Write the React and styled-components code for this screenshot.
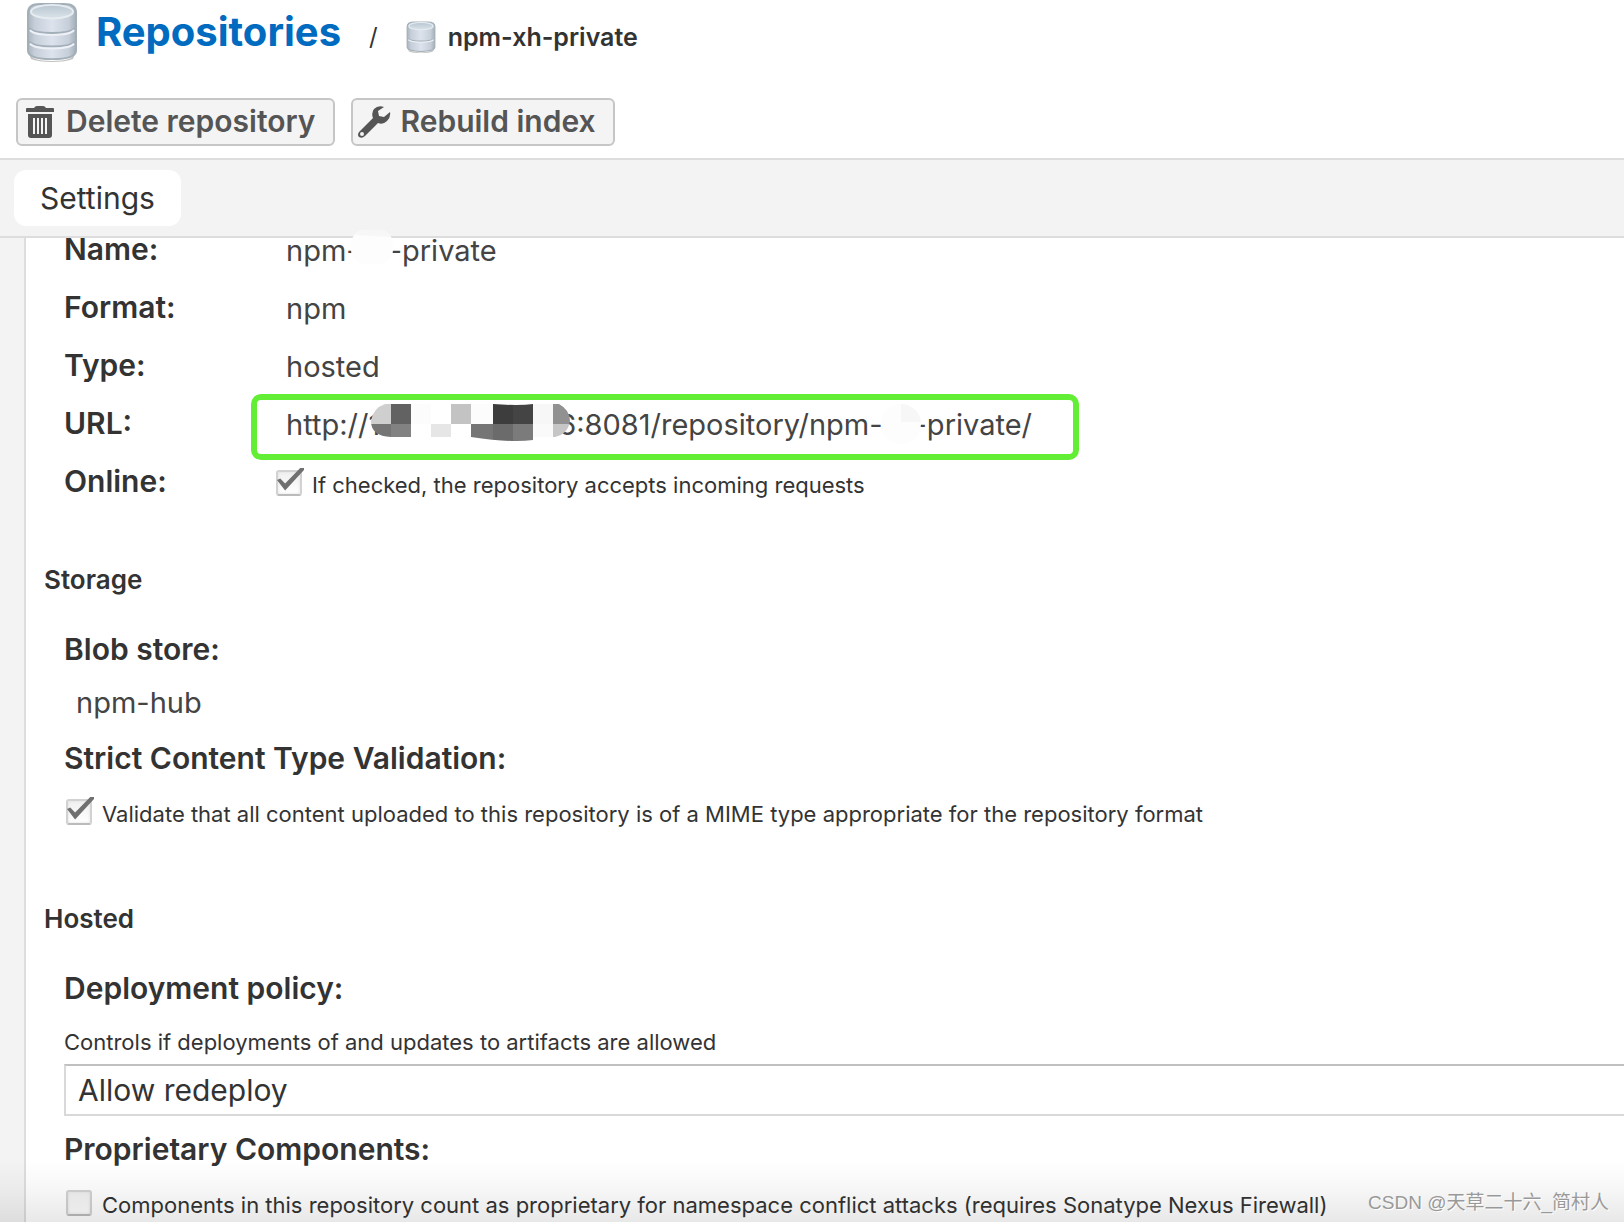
import React, { useState } from 'react'
import styled, { createGlobalStyle } from 'styled-components';

const GlobalStyle = createGlobalStyle`
    * {
        box-sizing: border-box;
    }
    body {
        margin: 0;
        color: #333;
        background: #fff;
        font-family: Inter, "Liberation Sans", sans-serif;
    }
    h1, h2, p {
        margin: 0;
    }
`;

const Page = styled.div`
    position: relative;
    display: flex;
    flex-direction: column;
    height: 100vh;
    overflow: hidden;
`;

const Header = styled.header`
    display: flex;
    align-items: center;
    gap: 18px;
    height: 64px;
    flex-shrink: 0;
    padding: 0 26px;
`;

const Breadcrumb = styled.nav`
    display: flex;
    align-items: flex-end;
    gap: 28px;
`;

const Title = styled.h1`
    font-size: 40px;
    font-weight: 700;
    line-height: 48px;
`;

const TitleLink = styled.a`
    color: #006bbf;
    text-decoration: none;
`;

const Slash = styled.span`
    font-size: 24px;
    line-height: 38px;
`;

const Crumb = styled.span`
    display: flex;
    align-items: center;
    gap: 12px;
    font-size: 25px;
    font-weight: 600;
    line-height: 38px;
`;

const Toolbar = styled.div`
    display: flex;
    gap: 16px;
    padding: 34px 16px 12px;
    border-bottom: 2px solid #ddd;
`;

const ToolButton = styled.button`
    display: flex;
    align-items: center;
    gap: 9px;
    height: 48px;
    padding: 0 17px 0 5px;
    border: 2px solid #c6c6c6;
    border-radius: 6px;
    background: #f4f4f4;
    color: #555;
    font: 600 30px/40px Inter, "Liberation Sans", sans-serif;
    cursor: pointer;
`;

const ButtonText = styled.span`
    padding-bottom: 3px;
`;

const TabBar = styled.div`
    display: flex;
    padding: 10px 14px;
    background: #f3f3f3;
    border-bottom: 2px solid #ddd;
`;

const Tab = styled.button`
    height: 56px;
    padding: 0 26px;
    border: 0;
    border-radius: 12px;
    background: #fff;
    color: #333;
    font: 30px Inter, "Liberation Sans", sans-serif;
    cursor: pointer;
`;

const Content = styled.main`
    flex: 1;
    min-height: 0;
    padding-left: 24px;
    background: #f3f3f3;
`;

const Form = styled.form`
    min-height: 100%;
    padding-left: 38px;
    border-left: 2px solid #ddd;
    background: #fff;
`;

const Row = styled.div`
    display: grid;
    grid-template-columns: 210px 1fr;
    height: 22px;
    margin-bottom: 36px;

    &:last-child {
        margin-bottom: 0;
    }
`;

const label = `
    display: block;
    font-size: 30px;
    font-weight: 600;
    line-height: 22px;
    color: #333;
`;

const Term = styled.span`
    ${label}
`;

const FieldLabel = styled.label`
    ${label}
`;

const Value = styled.div`
    position: relative;
    display: flex;
    padding-left: 12px;
    font-size: 29px;
    line-height: 26px;
    color: #444;
    white-space: nowrap;
`;

const Highlight = styled.div`
    position: absolute;
    top: -18px;
    left: -23px;
    width: 828px;
    height: 66px;
    border: 6px solid #62ee34;
    border-radius: 10px;
`;

const Mosaic = styled.svg`
    position: relative;
    flex-shrink: 0;
    margin: -8px ${props => props.$after}px 0 ${props => props.$before}px;
`;

const Section = styled.section`
    display: flex;
    flex-direction: column;
    margin-top: 76px;
    padding-bottom: 2px;
`;

const SectionTitle = styled.h2`
    margin: 0 0 46px -20px;
    font-size: 26px;
    font-weight: 600;
    line-height: 24px;
`;

const Field = styled.div`
    display: flex;
    flex-direction: column;
    gap: ${props => props.$gap || 30}px;
    margin-bottom: ${props => props.$space || 0}px;
`;

const HelpText = styled.p`
    font-size: 22px;
    line-height: 22px;
`;

const Select = styled.select`
    appearance: none;
    width: 100%;
    height: 52px;
    margin-top: -21px;
    padding: 0 12px;
    border: 2px solid #d9d9d9;
    border-top-color: #c0c0c0;
    border-right: 0;
    border-radius: 0;
    background: #fff;
    color: #333;
    font: 30px Inter, "Liberation Sans", sans-serif;
`;

const CheckLabel = styled.label`
    display: flex;
    align-items: center;
    height: 30px;
    font-size: 22px;
    white-space: nowrap;
`;

const Checkbox = styled.input`
    appearance: none;
    position: relative;
    width: 26px;
    height: 26px;
    margin: 0 10px 4px 2px;
    border: 2px solid #d2d2d2;
    border-bottom-color: #bbb;
    border-radius: 3px;
    background: linear-gradient(#f0f0f0, #fff);
    box-shadow: inset 0 0 3px #ddd;

    &:checked::after {
        content: "";
        position: absolute;
        top: -4px;
        left: -1px;
        width: 27px;
        height: 24px;
        background: #707070;
        clip-path: polygon(0 50%, 12% 44%, 30% 65%, 86% 0, 100% 0, 100% 8%, 30% 94%);
    }
`;

const BottomFade = styled.div`
    position: absolute;
    right: 0;
    bottom: 0;
    left: 0;
    height: 62px;
    background: linear-gradient(rgba(0, 0, 0, 0), rgba(0, 0, 0, 0.03) 45%, rgba(0, 0, 0, 0.09));
    pointer-events: none;
`;

const Watermark = styled.div`
    position: absolute;
    right: 15px;
    bottom: 4px;
    color: #999;
    font: 19px/30px "Liberation Sans", "Noto Sans CJK SC", sans-serif;
    text-shadow: 1px 1px 0 #fff;
`;

function DatabaseIcon({ width, height, layers = 3 }) {
    const seams = layers === 3 ? [27, 41] : [34];

    return (
        <svg width={width} height={height} viewBox="0 0 52 62" preserveAspectRatio="none" aria-hidden="true">
            <defs>
                <linearGradient id={`side${layers}`} x1="0" x2="1">
                    <stop offset="0" stopColor="#a9b5c0" />
                    <stop offset="0.14" stopColor="#c5ced9" />
                    <stop offset="0.5" stopColor="#dde3ed" />
                    <stop offset="0.85" stopColor="#c5ced9" />
                    <stop offset="1" stopColor="#a3afba" />
                </linearGradient>
                <linearGradient id={`top${layers}`} x1="0" y1="0" x2="0" y2="1">
                    <stop offset="0" stopColor="#b9c6d0" />
                    <stop offset="1" stopColor="#d9e3ea" />
                </linearGradient>
            </defs>
            <path d="M3 53Q5 61 26 61T49 53L47 59Q40 62 26 62T5 59Z" fill="#999" opacity="0.6" />
            <path
                d="M2 11Q2 2 14 2H38Q50 2 50 11V50Q50 59 26 59T2 50Z"
                fill={`url(#side${layers})`}
                stroke="#a3afb7"
                strokeWidth="2"
            />
            <ellipse cx="26" cy="10" rx="21" ry="7" fill={`url(#top${layers})`} stroke="#e6ecf0" strokeWidth="2" />
            {seams.map(y => (
                <g key={y} fill="none">
                    <path d={`M3 ${y}Q8 ${y + 5} 26 ${y + 5}T49 ${y}`} stroke="#a3afb9" strokeWidth="2" />
                    <path d={`M4 ${y + 2}Q8 ${y + 7} 26 ${y + 7}T48 ${y + 2}`} stroke="#eef1f6" strokeWidth="2" />
                </g>
            ))}
        </svg>
    )
}

function TrashIcon() {
    return (
        <svg width="34" height="34" viewBox="0 0 34 34" aria-hidden="true">
            <path fill="#555" d="M4 3H11Q12 1 14 1H20Q22 1 23 3H30Q31 3 31 4V7H3V4Q3 3 4 3Z" />
            <path
                fill="#555"
                fillRule="evenodd"
                d="M5 9H29V30Q29 33 26 33H8Q5 33 5 30ZM10 13V29H12V13ZM14 13V29H16V13ZM18 13V29H20V13ZM22 13V29H24V13Z"
            />
        </svg>
    )
}

function WrenchIcon() {
    return (
        <svg width="34" height="34" viewBox="0 0 34 34" aria-hidden="true">
            <path
                fill="#555"
                fillRule="evenodd"
                d="M26 2Q20 0 16 4Q13 8 15 13L1 27Q-1 30 1 32Q4 34 7 31L20 18Q25 20 29 16Q33 12 32 7L26 12L21 11L20 6ZM4 27A2 2 0 1 1 4 31A2 2 0 1 1 4 27Z"
            />
        </svg>
    )
}

const tiles = [
    [0, 0, 20, '#cfcfcf'], [20, 0, 20, '#626262'], [40, 0, 20, '#fcfcfc'], [60, 0, 20, '#fff'],
    [80, 0, 20, '#c3c3c3'], [100, 0, 22, '#fcfcfc'], [122, 0, 20, '#3d3d3d'], [142, 0, 20, '#444'],
    [162, 0, 20, '#f7f7f7'], [182, 0, 18, '#919191'],
    [0, 20, 20, '#757575'], [20, 20, 20, '#828282'], [40, 20, 20, '#fff'], [60, 20, 20, '#e6e6e6'],
    [80, 20, 20, '#fff'], [100, 20, 22, '#757575'], [122, 20, 20, '#6b6b6b'], [142, 20, 20, '#7b7b7b'],
    [162, 20, 20, '#fafafa'], [182, 20, 18, '#c6c6c6'],
];

function HostMosaic() {
    return (
        <Mosaic width="199" height="37" $before={-9} $after={-12} aria-hidden="true">
            <clipPath id="host">
                <path d="M14 0H122Q148 2 162 0H188Q199 6 199 17Q197 30 184 33H162V36Q140 39 100 33H20Q0 32 0 17Q2 4 14 0Z" />
            </clipPath>
            <g clipPath="url(#host)">
                {tiles.map(([x, y, width, fill]) => (
                    <rect key={`${x}-${y}`} x={x} y={y} width={width} height="20" fill={fill} />
                ))}
            </g>
        </Mosaic>
    )
}

function CheckField({ checked, children, ...props }) {
    const [value, setValue] = useState(checked);

    return (
        <CheckLabel>
            <Checkbox type="checkbox" checked={value} onChange={e => setValue(e.target.checked)} {...props} />
            {children}
        </CheckLabel>
    )
}

function App() {
    return (
        <Page>
            <GlobalStyle />
            <Header>
                <DatabaseIcon width={52} height={60} />
                <Breadcrumb>
                    <Title><TitleLink href="#repositories">Repositories</TitleLink></Title>
                    <Slash>/</Slash>
                    <Crumb>
                        <DatabaseIcon width={30} height={32} layers={2} />
                        npm-xh-private
                    </Crumb>
                </Breadcrumb>
            </Header>
            <Toolbar>
                <ToolButton type="button"><TrashIcon /><ButtonText>Delete repository</ButtonText></ToolButton>
                <ToolButton type="button"><WrenchIcon /><ButtonText>Rebuild index</ButtonText></ToolButton>
            </Toolbar>
            <TabBar>
                <Tab type="button">Settings</Tab>
            </TabBar>
            <Content>
                <Form>
                    <Row>
                        <Term>Name:</Term>
                        <Value>
                            npm-
                            <Mosaic width="42" height="34" $before={-9} $after={-4} aria-hidden="true">
                                <rect width="42" height="34" rx="14" fill="#fdfdfd" />
                                <path d="M4 5Q8 0 14 0H30Q38 2 40 7Z" fill="#f7f7f7" />
                            </Mosaic>
                            -private
                        </Value>
                    </Row>
                    <Row>
                        <Term>Format:</Term>
                        <Value>npm</Value>
                    </Row>
                    <Row>
                        <Term>Type:</Term>
                        <Value>hosted</Value>
                    </Row>
                    <Row>
                        <Term>URL:</Term>
                        <Value>
                            http://1
                            <HostMosaic />
                            6:8081/repository/npm-
                            <Mosaic width="40" height="42" $before={-2} $after={-7} aria-hidden="true">
                                <circle cx="20" cy="20" r="20" fill="#fdfdfd" />
                                <path d="M20 0A20 20 0 0 1 40 18H20Z" fill="#f7f7f7" />
                            </Mosaic>
                            -private/
                            <Highlight />
                        </Value>
                    </Row>
                    <Row>
                        <FieldLabel htmlFor="online">Online:</FieldLabel>
                        <CheckField id="online" checked>
                            If checked, the repository accepts incoming requests
                        </CheckField>
                    </Row>

                    <Section>
                        <SectionTitle>Storage</SectionTitle>
                        <Field $space={31}>
                            <Term>Blob store:</Term>
                            <Value>npm-hub</Value>
                        </Field>
                        <Field>
                            <FieldLabel htmlFor="strict">Strict Content Type Validation:</FieldLabel>
                            <CheckField id="strict" checked>
                                Validate that all content uploaded to this repository is of a MIME type appropriate for the repository format
                            </CheckField>
                        </Field>
                    </Section>

                    <Section>
                        <SectionTitle>Hosted</SectionTitle>
                        <Field $space={22} $gap={32}>
                            <FieldLabel htmlFor="policy">Deployment policy:</FieldLabel>
                            <HelpText>Controls if deployments of and updates to artifacts are allowed</HelpText>
                            <Select id="policy" defaultValue="allow">
                                <option value="allow">Allow redeploy</option>
                                <option value="once">Disable redeploy</option>
                                <option value="readonly">Read-only</option>
                            </Select>
                        </Field>
                        <Field>
                            <FieldLabel htmlFor="proprietary">Proprietary Components:</FieldLabel>
                            <CheckField id="proprietary" checked={false}>
                                Components in this repository count as proprietary for namespace conflict attacks (requires Sonatype Nexus Firewall)
                            </CheckField>
                        </Field>
                    </Section>
                </Form>
            </Content>
            <BottomFade />
            <Watermark>CSDN @天草二十六_简村人</Watermark>
        </Page>
    )
}

export default App;
